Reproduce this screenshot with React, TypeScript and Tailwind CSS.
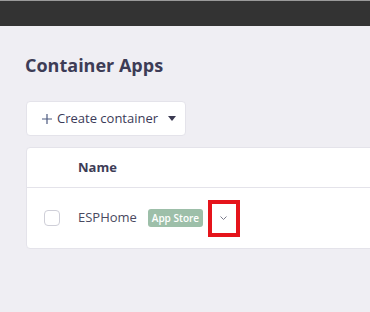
import React from 'react';

export default function App() {
  return (
    <div
      className="w-[370px] h-[312px] overflow-hidden bg-[#efeef3] text-[#3b3a52]"
      style={{ fontFamily: '"Open Sans", "Noto Sans", sans-serif' }}
    >
      {/* Top bar */}
      <div className="h-[26px] bg-[#333333] border-t border-[#9a9a9a]" />

      <div className="pl-[25px] pt-[27px]">
        <h1 className="text-[18px] leading-[24px] font-bold text-[#3d3c56]">Container Apps</h1>

        <button className="mt-[24px] ml-px h-[35px] w-[160px] flex items-center pl-[15px] bg-white rounded-[4px] border border-[#e4e3ea] text-[13px] text-[#3b3a58]">
          <svg className="mr-[5px]" width="10" height="10" viewBox="0 0 10 10">
            <path d="M5 0v10M0 5h10" stroke="#4d5a80" strokeWidth="1.2" />
          </svg>
          <span>Create container</span>
          <svg className="ml-[10px]" width="8" height="5" viewBox="0 0 8 5">
            <path d="M0 0h8L4 5z" fill="#3b3a52" />
          </svg>
        </button>

        {/* Table card */}
        <div className="mt-[11px] ml-px w-[420px] bg-white rounded-l-[4px] border border-[#e4e3ea]">
          <div className="h-[40px] flex items-center border-b border-[#e4e3ea]">
            <span className="ml-[51px] text-[13px] font-bold text-[#3d3c56]">Name</span>
          </div>
          <div className="h-[60px] flex items-center">
            <span className="ml-[17px] w-[16px] h-[16px] rounded-[4px] border border-[#cfcfd8] bg-white" />
            <span className="ml-[18px] text-[13px] text-[#4a4960]">ESPHome</span>
            <span className="ml-[11px] h-[18px] w-[55px] justify-center flex items-center rounded-[3px] bg-[#9dbfa9] text-[10px] font-semibold text-white">
              App Store
            </span>
            <span className="ml-[5px] w-[32px] h-[37px] flex items-center justify-center border-[4px] border-[#e5141b] bg-white">
              <svg width="7" height="4" viewBox="0 0 7 4">
                <path d="M0.5 0.5L3.5 3.5L6.5 0.5" fill="none" stroke="#7a7a8a" strokeWidth="1" />
              </svg>
            </span>
          </div>
        </div>
      </div>
    </div>
  );
}
